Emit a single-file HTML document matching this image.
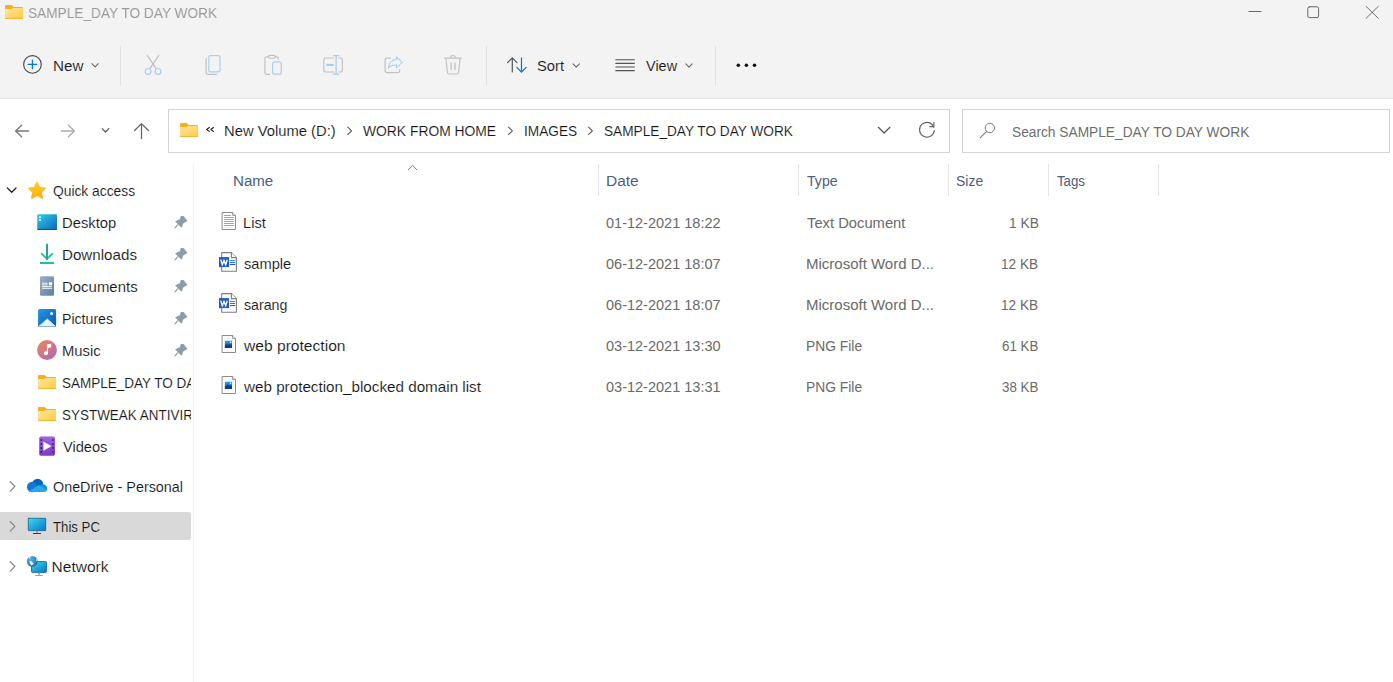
<!DOCTYPE html>
<html><head><meta charset="utf-8"><title>File Explorer</title>
<style>
html,body{margin:0;padding:0;width:1393px;height:682px;overflow:hidden;background:#fff;font-family:"Liberation Sans",sans-serif;font-size:15.5px}
.abs{position:absolute}
.t{position:absolute;white-space:pre;line-height:20px;height:20px;transform-origin:0 50%}
.clip{position:absolute;overflow:hidden}
#top{position:absolute;left:0;top:0;width:1393px;height:98px;background:#f3f3f3;border-bottom:1px solid #e2e2e2}
.box{position:absolute;box-sizing:border-box;border:1px solid #d4d4d4;background:#fff}
.vsep{position:absolute;width:1px;background:#e6e6e6}
#sel{position:absolute;left:0;top:512px;width:191px;height:28px;background:#d9d9d9;border-radius:0 3px 3px 0}
svg{position:absolute;left:0;top:0}
</style></head><body>
<div id="top"></div>
<div class="vsep" style="left:120px;top:46px;height:39px;background:#e0e0e0"></div>
<div class="vsep" style="left:486px;top:46px;height:39px;background:#e0e0e0"></div>
<div class="vsep" style="left:715px;top:46px;height:39px;background:#e0e0e0"></div>
<div class="box" style="left:168px;top:109px;width:782px;height:44px"></div>
<div class="box" style="left:962px;top:109px;width:428px;height:44px"></div>
<div class="vsep" style="left:193px;top:164px;height:518px;background:#f3f3f3"></div>
<div class="vsep" style="left:598px;top:164px;height:32px"></div>
<div class="vsep" style="left:798px;top:164px;height:32px"></div>
<div class="vsep" style="left:948px;top:164px;height:32px"></div>
<div class="vsep" style="left:1048px;top:164px;height:32px"></div>
<div class="vsep" style="left:1158px;top:164px;height:32px"></div>
<div id="sel"></div>
<div class="t" style="left:27.52px;top:3.00px;color:#9a9a9a;transform:scaleX(0.8813);will-change:transform">SAMPLE_DAY TO DAY WORK</div>
<div class="t" style="left:52.82px;top:56.00px;color:#161616;transform:scaleX(0.9800);-webkit-text-stroke:0.12px #f3f3f3">New</div>
<div class="t" style="left:536.75px;top:56.00px;color:#161616;transform:scaleX(0.9500);-webkit-text-stroke:0.12px #f3f3f3">Sort</div>
<div class="t" style="left:645.50px;top:56.00px;color:#161616;transform:scaleX(0.9324);-webkit-text-stroke:0.12px #f3f3f3">View</div>
<div class="t" style="left:223.65px;top:121.00px;color:#161616;transform:scaleX(0.9534);-webkit-text-stroke:0.12px #fff">New Volume (D:)</div>
<div class="t" style="left:363.20px;top:121.00px;color:#161616;transform:scaleX(0.8933);-webkit-text-stroke:0.12px #fff">WORK FROM HOME</div>
<div class="t" style="left:523.72px;top:121.00px;color:#161616;transform:scaleX(0.8814);-webkit-text-stroke:0.12px #fff">IMAGES</div>
<div class="t" style="left:603.62px;top:121.00px;color:#161616;transform:scaleX(0.8808);-webkit-text-stroke:0.12px #fff">SAMPLE_DAY TO DAY WORK</div>
<div class="t" style="left:1012.41px;top:122.00px;color:#6e6e6e;transform:scaleX(0.8858)">Search SAMPLE_DAY TO DAY WORK</div>
<div class="t" style="left:52.60px;top:180.50px;color:#161616;transform:scaleX(0.8902);-webkit-text-stroke:0.12px #fff">Quick access</div>
<div class="t" style="left:61.74px;top:212.50px;color:#161616;transform:scaleX(0.9554);-webkit-text-stroke:0.12px #fff">Desktop</div>
<div class="t" style="left:61.72px;top:244.50px;color:#161616;transform:scaleX(0.9776);-webkit-text-stroke:0.12px #fff">Downloads</div>
<div class="t" style="left:61.74px;top:276.50px;color:#161616;transform:scaleX(0.9649);-webkit-text-stroke:0.12px #fff">Documents</div>
<div class="t" style="left:61.79px;top:308.50px;color:#161616;transform:scaleX(0.9109);-webkit-text-stroke:0.12px #fff">Pictures</div>
<div class="t" style="left:61.74px;top:340.50px;color:#161616;transform:scaleX(0.9564);-webkit-text-stroke:0.12px #fff">Music</div>
<div class="t" style="left:62.70px;top:436.50px;color:#161616;transform:scaleX(0.9426);-webkit-text-stroke:0.12px #fff">Videos</div>
<div class="t" style="left:52.60px;top:476.50px;color:#161616;transform:scaleX(0.9257);-webkit-text-stroke:0.12px #fff">OneDrive - Personal</div>
<div class="t" style="left:52.60px;top:516.50px;color:#161616;transform:scaleX(0.8509);-webkit-text-stroke:0.12px #d9d9d9">This PC</div>
<div class="t" style="left:51.60px;top:556.50px;color:#161616;transform:scaleX(1.0000);-webkit-text-stroke:0.12px #fff">Network</div>
<div class="t" style="left:232.83px;top:171.00px;color:#4c607a;transform:scaleX(0.9725)">Name</div>
<div class="t" style="left:605.70px;top:171.00px;color:#4c607a;transform:scaleX(0.9968)">Date</div>
<div class="t" style="left:806.70px;top:171.00px;color:#4c607a;transform:scaleX(0.9121)">Type</div>
<div class="t" style="left:955.70px;top:171.00px;color:#4c607a;transform:scaleX(0.9000)">Size</div>
<div class="t" style="left:1056.50px;top:171.00px;color:#4c607a;transform:scaleX(0.8545)">Tags</div>
<div class="t" style="left:243.36px;top:212.70px;color:#161616;transform:scaleX(0.9435);-webkit-text-stroke:0.12px #fff">List</div>
<div class="t" style="left:244.30px;top:253.70px;color:#161616;transform:scaleX(0.9460);-webkit-text-stroke:0.12px #fff">sample</div>
<div class="t" style="left:244.30px;top:294.70px;color:#161616;transform:scaleX(0.9149);-webkit-text-stroke:0.12px #fff">sarang</div>
<div class="t" style="left:244.30px;top:335.70px;color:#161616;transform:scaleX(1.0070);-webkit-text-stroke:0.12px #fff">web protection</div>
<div class="t" style="left:244.30px;top:376.70px;color:#161616;transform:scaleX(0.9822);-webkit-text-stroke:0.12px #fff">web protection_blocked domain list</div>
<div class="t" style="left:606.20px;top:212.70px;color:#6a6a6a;transform:scaleX(0.9361)">01-12-2021 18:22</div>
<div class="t" style="left:606.20px;top:253.70px;color:#6a6a6a;transform:scaleX(0.9361)">06-12-2021 18:07</div>
<div class="t" style="left:606.20px;top:294.70px;color:#6a6a6a;transform:scaleX(0.9361)">06-12-2021 18:07</div>
<div class="t" style="left:606.20px;top:335.70px;color:#6a6a6a;transform:scaleX(0.9361)">03-12-2021 13:30</div>
<div class="t" style="left:606.20px;top:376.70px;color:#6a6a6a;transform:scaleX(0.9361)">03-12-2021 13:31</div>
<div class="t" style="left:806.70px;top:212.70px;color:#6a6a6a;transform:scaleX(0.9519)">Text Document</div>
<div class="t" style="left:805.73px;top:253.70px;color:#6a6a6a;transform:scaleX(0.9669)">Microsoft Word D...</div>
<div class="t" style="left:805.73px;top:294.70px;color:#6a6a6a;transform:scaleX(0.9669)">Microsoft Word D...</div>
<div class="t" style="left:805.81px;top:335.70px;color:#6a6a6a;transform:scaleX(0.8919)">PNG File</div>
<div class="t" style="left:805.81px;top:376.70px;color:#6a6a6a;transform:scaleX(0.8919)">PNG File</div>
<div class="t" style="left:1009.01px;top:212.70px;color:#6a6a6a;transform:scaleX(0.8875)">1 KB</div>
<div class="t" style="left:1001.32px;top:253.70px;color:#6a6a6a;transform:scaleX(0.8805)">12 KB</div>
<div class="t" style="left:1001.32px;top:294.70px;color:#6a6a6a;transform:scaleX(0.8805)">12 KB</div>
<div class="t" style="left:1002.20px;top:335.70px;color:#6a6a6a;transform:scaleX(0.8595)">61 KB</div>
<div class="t" style="left:1002.20px;top:376.70px;color:#6a6a6a;transform:scaleX(0.8595)">38 KB</div>
<div class="clip" style="left:0;top:372.50px;width:191px;height:20px"><div class="t" style="left:61.83px;top:0;color:#161616;-webkit-text-stroke:0.12px #fff;transform:scaleX(0.8709)">SAMPLE_DAY TO DAY WORK</div></div>
<div class="clip" style="left:0;top:404.50px;width:191px;height:20px"><div class="t" style="left:61.83px;top:0;color:#161616;-webkit-text-stroke:0.12px #fff;transform:scaleX(0.8681)">SYSTWEAK ANTIVIRUS</div></div>
<svg width="1393" height="682" viewBox="0 0 1393 682" fill="none" stroke-linecap="round" stroke-linejoin="round">
<defs>
<linearGradient id="gF" x1="0" y1="0" x2="1" y2="1"><stop offset="0" stop-color="#ffe7a0"/><stop offset="1" stop-color="#ffcb45"/></linearGradient>
<linearGradient id="gD" x1="0" y1="0" x2="1" y2="1"><stop offset="0" stop-color="#2fd0ea"/><stop offset="1" stop-color="#0f63b8"/></linearGradient>
<linearGradient id="gDoc" x1="0" y1="0" x2="1" y2="1"><stop offset="0" stop-color="#9bb0c8"/><stop offset="1" stop-color="#5f7f9f"/></linearGradient>
<linearGradient id="gP" x1="0" y1="0" x2="1" y2="1"><stop offset="0" stop-color="#2396ea"/><stop offset="1" stop-color="#0c58b0"/></linearGradient>
<linearGradient id="gM" x1="0" y1="0" x2="1" y2="1"><stop offset="0" stop-color="#f08a52"/><stop offset="1" stop-color="#a864c0"/></linearGradient>
<linearGradient id="gV" x1="0" y1="0" x2="0" y2="1"><stop offset="0" stop-color="#a25ee6"/><stop offset="1" stop-color="#7a3cc4"/></linearGradient>
<linearGradient id="gPC" x1="0" y1="0" x2="1" y2="1"><stop offset="0" stop-color="#3ddfea"/><stop offset=".5" stop-color="#20a8dc"/><stop offset="1" stop-color="#1272c8"/></linearGradient>
<radialGradient id="gGl" cx=".35" cy=".3" r=".8"><stop offset="0" stop-color="#5fb0e6"/><stop offset=".6" stop-color="#3486c8"/><stop offset="1" stop-color="#245f98"/></radialGradient>
<linearGradient id="gS" x1="0" y1="0" x2="0" y2="1"><stop offset="0" stop-color="#ffd02e"/><stop offset="1" stop-color="#ffad0d"/></linearGradient>
<linearGradient id="gDl" x1="0" y1="0" x2="0" y2="1"><stop offset="0" stop-color="#1fa38b"/><stop offset="1" stop-color="#1ec392"/></linearGradient>
<linearGradient id="gImg" x1="0" y1="0" x2="0" y2="1"><stop offset="0" stop-color="#23a4f0"/><stop offset="0.45" stop-color="#1e7fd6"/><stop offset="1" stop-color="#0b2c7c"/></linearGradient>
<g id="folder" stroke="none">
 <path d="M0 1Q0 0 1 0H6.3Q6.9 0 7.3 .5L8.6 2.1H17Q18 2.1 18 3.1V13Q18 14 17 14H1Q0 14 0 13Z" fill="#f2b21d"/>
 <path d="M0 3.9H6.4Q6.9 3.9 7.3 3.5L8 2.9H17.3Q18 2.9 18 3.6V13.2H0Z" fill="url(#gF)"/>
 <rect x="0" y="13.3" width="18" height=".7" rx=".35" fill="#ecb83c"/>
</g>
<g id="pin" stroke="none">
 <path d="M16.9 8.1L18.9 7.9Q19.4 7.9 19.8 8.3L23.1 12.5Q23.4 13 22.7 13.6L19.4 15.2L17.6 19.8L11 13.2L15.6 11.4Z" fill="#8f9ba6"/>
 <path d="M13.9 16.9L10.9 19.9" stroke="#8f9ba6" stroke-width="1.3"/>
</g>
<g id="chevR"><path d="M10.2 0L14.9 4.7L10.2 9.4" stroke="#8a8a8a" stroke-width="1.3"/></g>
<g id="bc"><path d="M0 0L3.8 3.6L0 7.2" stroke="#5a5a5a" stroke-width="1.15"/></g>
<g id="tchev"><path d="M0 0L3.2 3.2L6.4 0" stroke="#666" stroke-width="1.05"/></g>
<g id="pngicon" stroke-linejoin="miter">
 <path d="M.5 .5H10.6L13.5 3.4V17.5H.5Z" fill="#fff" stroke="#8c8c8c" stroke-width="1"/>
 <rect x="2.3" y="2.4" width="9.3" height="13" fill="#f5f5f5" stroke="none"/>
 <path d="M10.6 .5V3.4H13.5" stroke="#8c8c8c" stroke-width=".9" fill="#f4f4f4"/>
 <rect x="2.9" y="5.8" width="7.1" height="7.1" fill="url(#gImg)" stroke="none"/>
 <path d="M2.9 10.6L5.6 8.6L7.2 9.8L8.6 8.9L10 10V12.9H2.9Z" fill="#12357a" stroke="none" opacity=".75"/>
 <circle cx="8.6" cy="7.2" r=".7" fill="#fff" stroke="none"/>
</g>
<g id="wordicon">
 <path d="M2.7 .6H12.4L17.4 5.6V19.2H2.7Z" fill="#fff" stroke="#7d7d7d" stroke-width="1.1"/>
 <path d="M12.4 .6V5.6H17.4" stroke="#7d7d7d" stroke-width="1.1" fill="#fafafa"/>
 <rect x="0" y="5.1" width="10" height="10" fill="#1e5bbd" stroke="none"/>
 <path d="M1.7 7.6L3.3 12.7L5 8.4L6.7 12.7L8.3 7.6" stroke="#fff" stroke-width="1.45" stroke-linejoin="miter" stroke-linecap="butt"/>
 <path d="M11.2 8.5H15.8" stroke="#3a8ee0" stroke-width="1"/>
 <path d="M11.2 10.5H15.8" stroke="#2b78d0" stroke-width="1"/>
 <path d="M11.2 12.5H15.8" stroke="#1e5bbd" stroke-width="1"/>
</g>
</defs>

<!-- title folder -->
<use href="#folder" x="5" y="5"/>
<!-- window controls -->
<path d="M1249 11.5H1261" stroke="#666" stroke-width="1"/>
<rect x="1307.8" y="6.8" width="10.8" height="10.8" rx="1.6" stroke="#666" stroke-width="1"/>
<path d="M1366.2 6.5L1378.2 18.2M1378.2 6.5L1366.2 18.2" stroke="#666" stroke-width=".95"/>

<!-- New -->
<circle cx="32.45" cy="64.4" r="8.8" stroke="#4a4a4a" stroke-width="1.15"/>
<path d="M28.1 64.4H36.7M32.4 60.1V68.7" stroke="#0078d4" stroke-width="1.25"/>
<use href="#tchev" x="91.9" y="63.7"/>
<!-- scissors -->
<path d="M147.1 55.2L156.2 68.6M158.9 55.2L149.9 68.6" stroke="#bdbdbd" stroke-width="1.15"/>
<circle cx="148.1" cy="71.4" r="2.9" stroke="#a9cfee" stroke-width="1.2"/>
<circle cx="158" cy="71.4" r="2.9" stroke="#a9cfee" stroke-width="1.2"/>
<!-- copy -->
<path d="M206.1 58.6V72.2Q206.1 74.3 208.2 74.3H216.6" stroke="#c2c2c2" stroke-width="1.2"/>
<rect x="208.8" y="55.6" width="11.2" height="16.2" rx="2" stroke="#a9cfee" stroke-width="1.2"/>
<!-- paste -->
<path d="M269.6 74.3H266.6Q264.9 74.3 264.9 72.6V58.6Q264.9 56.9 266.6 56.9H276.6Q278.3 56.9 278.3 58.6V59.6" stroke="#c2c2c2" stroke-width="1.2"/>
<rect x="268.5" y="55.4" width="6.6" height="2.9" rx="1.45" stroke="#c2c2c2" stroke-width="1.1" fill="#f3f3f3"/>
<rect x="272.6" y="61.8" width="8.6" height="12.4" rx="2" stroke="#a9cfee" stroke-width="1.2"/>
<!-- rename -->
<path d="M333.4 58H326Q323.8 58 323.8 60.2V69.8Q323.8 72 326 72H333.4" stroke="#c2c2c2" stroke-width="1.2"/>
<path d="M338.8 58H340.2Q342.4 58 342.4 60.2V69.8Q342.4 72 340.2 72H338.8" stroke="#c2c2c2" stroke-width="1.2"/>
<path d="M336.1 55.6V74.2M333.6 55.6H338.6M333.6 74.2H338.6" stroke="#a2cbed" stroke-width="1.2"/>
<path d="M326.4 64.9H333.6" stroke="#a2cbed" stroke-width="2" stroke-linecap="butt"/>
<!-- share -->
<path d="M390.6 58.1H387.2Q385.1 58.1 385.1 60.2V70.6Q385.1 72.7 387.2 72.7H397.6Q399.7 72.7 399.7 70.6V69.6" stroke="#c2c2c2" stroke-width="1.2"/>
<path d="M396.5 56.9L402.1 62.4L396.5 68V65.1Q391 64.8 388.3 68.2Q389.2 60.3 396.5 59.6Z" stroke="#a9cfee" stroke-width="1.05"/>
<!-- delete -->
<path d="M444.5 58.1H461.4" stroke="#c2c2c2" stroke-width="1.2"/>
<path d="M450.6 57.9Q450.6 55.5 453 55.5Q455.4 55.5 455.4 57.9" stroke="#c2c2c2" stroke-width="1.1"/>
<path d="M445.9 58.5L447.4 72.2Q447.6 74 449.4 74H456.6Q458.4 74 458.6 72.2L460.1 58.5" stroke="#c2c2c2" stroke-width="1.2"/>
<path d="M451.1 63V69.5M455 63V69.5" stroke="#c2c2c2" stroke-width="1.3"/>
<!-- sort -->
<path d="M512.3 72V57.8M507.6 62.6L512.3 57.8L517 62.6" stroke="#555" stroke-width="1.2"/>
<path d="M521.5 57.8V72.2M516.8 67.4L521.5 72.2L526.2 67.4" stroke="#0078d4" stroke-width="1.2"/>
<use href="#tchev" x="573" y="63.9"/>
<!-- view -->
<path d="M615.4 59.8H634.8M615.4 63.4H634.8M615.4 67H634.8M615.4 70.6H634.8" stroke="#555" stroke-width="1.1" stroke-linecap="butt"/>
<use href="#tchev" x="685.8" y="63.9"/>
<!-- more -->
<g fill="#111" stroke="none"><circle cx="738.3" cy="65.3" r="1.75"/><circle cx="746.4" cy="65.3" r="1.75"/><circle cx="754.5" cy="65.3" r="1.75"/></g>

<!-- nav arrows -->
<path d="M28.6 131H15.6M21.6 125.2L15.6 131L21.6 136.8" stroke="#787878" stroke-width="1.3"/>
<path d="M61.3 131H74.4M68.4 125.2L74.4 131L68.4 136.8" stroke="#ababab" stroke-width="1.3"/>
<path d="M102.2 128.7L105.5 132L108.8 128.7" stroke="#555" stroke-width="1.2"/>
<path d="M141.5 138.6V123.6M134.6 130.5L141.5 123.6L148.4 130.5" stroke="#666" stroke-width="1.3"/>
<!-- address folder + chevrons -->
<use href="#folder" x="180" y="123"/>
<path d="M209.3 127.5L206.6 129.45L209.3 131.4M213.5 127.5L210.8 129.45L213.5 131.4" stroke="#1a1a1a" stroke-width="1.1"/>
<use href="#bc" x="347.8" y="127.2"/>
<use href="#bc" x="508.6" y="127.2"/>
<use href="#bc" x="588.6" y="127.2"/>
<path d="M878.3 127.3L884.1 133L889.9 127.3" stroke="#555" stroke-width="1.25"/>
<path d="M933.9 127.2A7.4 7.4 0 1 0 934.3 130.6" stroke="#666" stroke-width="1.15"/>
<path d="M933.9 122.4V126.6H929.7" stroke="#666" stroke-width="1.15"/>
<!-- search -->
<circle cx="989.9" cy="128" r="4.7" stroke="#7a7a7a" stroke-width="1"/>
<path d="M986.4 131.6L980.3 137.6" stroke="#7a7a7a" stroke-width="1.1"/>
<!-- header sort chevron -->
<path d="M408.3 169.8L412.6 165.5L416.9 169.8" stroke="#777" stroke-width="1"/>

<!-- nav tree -->
<path d="M7.4 188L11.7 192.2L16 188" stroke="#222" stroke-width="1.3"/>
<path d="M37 182.2L39.6 187.5L45.2 188.2L41.1 192.2L42.2 198L37 195.2L31.8 198L32.9 192.2L28.8 188.2L34.4 187.5Z" fill="url(#gS)" stroke="url(#gS)" stroke-width="1.5"/>
<!-- desktop -->
<rect x="37.2" y="214.2" width="19.8" height="15.4" rx="1.2" fill="url(#gD)" stroke="none"/>
<rect x="37.2" y="229" width="19.8" height=".9" rx=".4" fill="#0a4f98" stroke="none"/>
<rect x="39.2" y="216.3" width="1.7" height="1.6" fill="#fff" stroke="none"/><rect x="39.2" y="219.2" width="1.7" height="1.6" fill="#fff" stroke="none"/>
<!-- downloads -->
<path d="M47 244.4V259M41.2 253.3L47 259.1L52.8 253.3" stroke="url(#gDl)" stroke-width="1.8" stroke-linecap="butt" stroke-linejoin="miter"/>
<path d="M47 244.4V259" stroke="#1fa88c" stroke-width="1.8"/>
<path d="M40 263H54" stroke="#1ec392" stroke-width="2" stroke-linecap="butt"/>
<!-- documents -->
<rect x="40" y="276.2" width="14" height="19.6" rx="1.3" fill="url(#gDoc)" stroke="none"/>
<path d="M42 283.2H47.6M42 284.9H47.6M42 286.6H52M42 288.3H52" stroke="#fff" stroke-width=".9" stroke-linecap="butt"/>
<rect x="48.9" y="282.3" width="3.1" height="3" fill="#fff" stroke="none"/>
<!-- pictures -->
<rect x="38.1" y="309" width="18" height="18" rx="1.6" fill="url(#gP)" stroke="none"/>
<path d="M39.4 325.9L47.3 318.9L55 325.9Z" fill="#e9f3fd" stroke="#e9f3fd" stroke-width=".8"/>
<circle cx="51.6" cy="313.4" r="1.5" fill="#fff" stroke="none"/>
<!-- music -->
<circle cx="47" cy="350" r="9.9" fill="url(#gM)" stroke="none"/>
<circle cx="45.9" cy="353.3" r="2" fill="#fff" stroke="none"/>
<path d="M47.5 353.3V344.8L50.6 344.4V346.9L47.5 347.4" stroke="#fff" stroke-width="1.1" fill="#fff" stroke-linejoin="miter"/>
<!-- folders -->
<use href="#folder" x="38" y="375"/>
<use href="#folder" x="38" y="407"/>
<!-- videos -->
<rect x="39.2" y="436.6" width="15.8" height="19.1" rx="1.6" fill="url(#gV)" stroke="none"/>
<g fill="#2f1560" stroke="none">
<rect x="40.5" y="439.2" width="1.5" height="1.6"/><rect x="40.5" y="443.2" width="1.5" height="1.6"/><rect x="40.5" y="447.2" width="1.5" height="1.6"/><rect x="40.5" y="451.2" width="1.5" height="1.6"/>
<rect x="52.2" y="439.2" width="1.5" height="1.6"/><rect x="52.2" y="443.2" width="1.5" height="1.6"/><rect x="52.2" y="447.2" width="1.5" height="1.6"/><rect x="52.2" y="451.2" width="1.5" height="1.6"/>
</g>
<path d="M44 442.3L50.8 446.2L44 450.1Z" fill="#fff" stroke="#fff" stroke-width=".7"/>
<!-- pins -->
<use href="#pin" x="164" y="208"/><use href="#pin" x="164" y="240"/><use href="#pin" x="164" y="272"/><use href="#pin" x="164" y="304"/><use href="#pin" x="164" y="336"/>
<!-- chevrons right -->
<use href="#chevR" x="0" y="481.7"/><use href="#chevR" x="0" y="521.7"/><use href="#chevR" x="0" y="561.7"/>
<!-- onedrive -->
<g stroke="none">
<circle cx="37.6" cy="484.4" r="5.6" fill="#0364b8"/>
<circle cx="32.1" cy="487" r="5.15" fill="#0f78d4"/>
<circle cx="43.3" cy="488.3" r="3.8" fill="#1490df"/>
<path d="M29.4 491.3L38.9 484.8L46.7 489.9Q45.9 492.1 43.4 492.1H31.6Q30.2 492 29.4 491.3Z" fill="#28a8ea"/>
</g>
<!-- this pc -->
<rect x="28.3" y="518.3" width="17.4" height="12.3" rx=".5" fill="url(#gPC)" stroke="#0e5f96" stroke-width=".8"/>
<rect x="36.2" y="531" width="1.6" height="1.9" fill="#8a9aa5" stroke="none"/>
<rect x="32.9" y="532.9" width="8.2" height="1.1" rx=".4" fill="#3c3c3c" stroke="none"/>
<!-- network -->
<rect x="31.5" y="561.5" width="15" height="10.9" rx=".9" fill="url(#gPC)" stroke="#0e5f96" stroke-width=".8"/>
<rect x="38.2" y="572.8" width="1.7" height="2.3" fill="#9aa7b0" stroke="none"/>
<rect x="35" y="575" width="8" height=".9" rx=".3" fill="#9aa7b0" stroke="none"/>
<circle cx="32.3" cy="561.4" r="5.4" fill="url(#gGl)" stroke="none"/>
<path d="M29.3 561.6L31 560.9L33.9 563.4L33.1 564.3L31.5 565.4L30.2 564Z" fill="#e2f1fb" stroke="none"/>
<path d="M28.6 557.6Q30 556.3 31.8 556.2Q30.6 557.4 29.4 558.9ZM36.3 558Q37.5 559.6 37.4 561.4L36 560.4Z" fill="#dcecf8" stroke="none" opacity=".9"/>

<!-- file icons -->
<g transform="translate(222,212)" stroke-linejoin="miter">
 <path d="M.5 .5H10.6L13.5 3.4V17.5H.5Z" fill="#fff" stroke="#8a8a8a" stroke-width="1"/>
 <path d="M10.6 .5V3.4H13.5" stroke="#8a8a8a" stroke-width=".9" fill="#f4f4f4"/>
 <path d="M2 3.5H8.9M2 5.5H11.9M2 7.5H11.9M2 9.5H11.9M2 11.5H11.9M2 13.5H11.9" stroke="#a4a4a4" stroke-width="1" stroke-linecap="butt"/>
 <path d="M2 15.5H11.9" stroke="#f0f0f0" stroke-width="1" stroke-linecap="butt"/>
</g>
<use href="#wordicon" x="219" y="252"/>
<use href="#wordicon" x="219" y="293"/>
<use href="#pngicon" x="222" y="335"/>
<use href="#pngicon" x="222" y="376"/>
</svg>

</body></html>
